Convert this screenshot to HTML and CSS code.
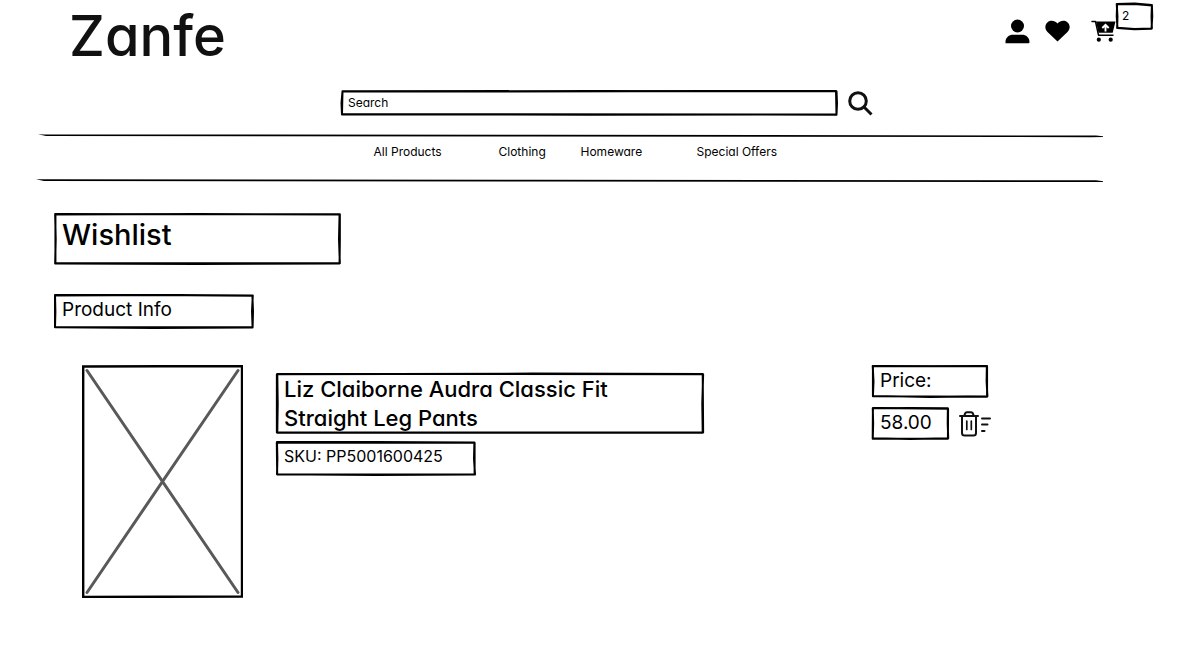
FILE: index.html
```html
<!DOCTYPE html>
<html lang="en">
<head>
<meta charset="utf-8">
<meta name="viewport" content="width=device-width, initial-scale=1">
<title>Zanfe – Wishlist</title>
<link rel="stylesheet" href="styles.css">
</head>
<body>
<header class="header">
  <a class="logo" href="#">Zanfe</a>
  <div class="actions">
    <button class="icon-button" type="button" aria-label="Account">
      <svg width="25" height="25" viewBox="0 0 25 25"><circle cx="12.5" cy="7" r="6.5"/><path d="M.5 24.200v-1.300C.5 18.500 4 15.800 8 15.800h9c4 0 7.500 2.700 7.500 7.100v.3q0 1-1 1z"/></svg>
    </button>
    <button class="icon-button" type="button" aria-label="Wishlist">
      <svg width="25" height="25" viewBox="0 0 25 25"><path d="M12.500 22.500 2.500 13C-.5 10-.3 5.500 2.600 3.200 5.500 1 9.700 1.300 12.500 4.500c2.800-3.200 7-3.500 9.900-1.300 2.900 2.300 3.100 6.800.1 9.800z"/></svg>
    </button>
    <button class="icon-button cart" type="button" aria-label="Cart">
      <svg width="25" height="25" viewBox="0 0 25 25"><path d="M1 2.500h3.500l3 13.700h14.500" fill="none" stroke="#000" stroke-width="1.500" stroke-linecap="round" stroke-linejoin="round"/><path d="M5 2.500h19.500l-2.800 11.200H7.500z"/><path d="M14.500 12.500V6M11.300 9l3.200-3.200L17.700 9" fill="none" stroke="#fff" stroke-width="1.900"/><circle cx="7.800" cy="20.700" r="2.100"/><circle cx="19.700" cy="20.700" r="2.100"/></svg>
    </button>
    <span class="box badge"><svg class="frame" viewBox="0 0 100 100" preserveAspectRatio="none" aria-hidden="true"><path d="M2 4 50 2 97 7 98 50 96 95 50 97 3 93 4 50ZM3 5 50 4 97 9 96 50 97 94 50 96 4 92 2 50Z"/></svg>2</span>
  </div>
</header>

<form class="search" role="search">
  <label class="box search-box"><svg class="frame" viewBox="0 0 100 100" preserveAspectRatio="none" aria-hidden="true"><path d="M.3 5 50 4 99.700 5 99.800 50 99.700 94 50 95 .2 94 .1 50ZM.3 6 99.600 4 99.700 95 .2 93Z"/></svg><input class="search-input" type="text" value="Search" aria-label="Search"></label>
  <button class="icon-button" type="submit" aria-label="Search">
    <svg width="25" height="25" viewBox="0 0 25 25" fill="none" stroke="#111" stroke-width="3"><circle cx="10" cy="10" r="8.300"/><path d="m16 16 7.500 7.500"/></svg>
  </button>
</form>

<nav class="nav" aria-label="Main">
  <svg class="rule" viewBox="0 0 1068 4" preserveAspectRatio="none" aria-hidden="true"><path d="M2 .3 8 .4 500 .7 1060 1.600 1067 2.300 1067 2.900 1055 3.200 500 2.400 10 2Z"/></svg>
  <ul class="nav-list">
    <li><a href="#">All Products</a></li>
    <li><a href="#">Clothing</a></li>
    <li><a href="#">Homeware</a></li>
    <li><a href="#">Special Offers</a></li>
  </ul>
  <svg class="rule" viewBox="0 0 1068 4" preserveAspectRatio="none" aria-hidden="true"><path d="M0 .2 6 .3 500 .8 1060 1.300 1067 2.200 1067 2.900 1055 3 500 2.600 8 1.900Z"/></svg>
</nav>

<main class="main">
  <h1 class="box title"><svg class="frame" viewBox="0 0 100 100" preserveAspectRatio="none" aria-hidden="true"><path d="M.4 2 40 2.500 99.600 2.500 99.600 50 99.500 97 50 98 .4 97 .6 50ZM.5 3 50 2 99.500 3 99.300 50 99.600 96.500 .5 96.500Z"/></svg>Wishlist</h1>
  <h2 class="box subtitle"><svg class="frame" viewBox="0 0 100 100" preserveAspectRatio="none" aria-hidden="true"><path d="M.5 3 50 3 99.200 5 99.500 50 99.300 96 50 97 .5 95 .7 50ZM.5 4 60 3 99.400 4 99 50 99.300 95 .5 95Z"/></svg>Product Info</h2>

  <article class="item">
    <svg class="thumb" viewBox="0 0 161 233" role="img" aria-label="Product image"><g fill="none" stroke="#595959" stroke-width="3" stroke-linecap="round"><path d="m5 5.500 151 222M156 5.500 5 227.500"/></g><path d="M1.200 1.500 80 1.300 160 1 160 231.500 80 231.800 1.200 232Z" fill="none" stroke="#000" stroke-width="2.400"/></svg>
    <div class="details">
      <h3 class="box name"><svg class="frame" viewBox="0 0 100 100" preserveAspectRatio="none" aria-hidden="true"><path d="M.3 1.500 50 1.500 99.800 2 99.600 50 99.700 98 50 98 .3 98 .4 50ZM.2 2 60 1 99.700 1.500 99.800 97.500 .2 97.500Z"/></svg>Liz Claiborne Audra Classic Fit Straight Leg Pants</h3>
      <p class="box sku"><svg class="frame" viewBox="0 0 100 100" preserveAspectRatio="none" aria-hidden="true"><path d="M.5 3 50 3 99.200 4 99 50 99.500 96 50 97 .5 95 .7 50ZM.4 4 99.300 5 99.300 95 .6 96Z"/></svg>SKU: PP5001600425</p>
    </div>
    <div class="pricing">
      <p class="box price-label"><svg class="frame" viewBox="0 0 100 100" preserveAspectRatio="none" aria-hidden="true"><path d="M.6 3 50 4 99 4 98.800 50 99.500 95 50 97 .8 94 1.300 50ZM.8 4 99.200 3 99.200 96 .8 95Z"/></svg>Price:</p>
      <div class="amount-row">
        <p class="box amount"><svg class="frame" viewBox="0 0 100 100" preserveAspectRatio="none" aria-hidden="true"><path d="M1 4 50 3 98.500 4 98.300 50 99 95 50 97 1 95 1.500 50ZM1.200 3 98.800 5 98.600 96 .9 96Z"/></svg>58.00</p>
        <button class="icon-button" type="button" aria-label="Remove from wishlist">
          <svg width="32" height="26" viewBox="0 0 32 26" fill="none" stroke="#111" stroke-width="2" stroke-linecap="round" stroke-linejoin="round"><path d="M1 5h18M5.500 4.500Q6 1.200 8 1.200h4q2 0 2.500 3.300M3 5.500v16.500q0 2.500 2.500 2.500h9q2.500 0 2.500-2.500V5.500"/><path d="M7.800 10v8.500M12.300 10v8.500" stroke-width="1.700"/><path d="M23 7.500h8M23 13.500h5.500M23 20h2.500"/></svg>
        </button>
      </div>
    </div>
  </article>
</main>
</body>
</html>
```
FILE: styles.css
```css
* {
  box-sizing: border-box;
}

body {
  margin: 0;
  background: #fff;
  color: #000;
  font-family: Inter, "Open Sans", sans-serif;
  font-feature-settings: "cv11";
  font-size: 12px;
  line-height: 20px;
}

h1, h2, h3, p, ul {
  margin: 0;
  padding: 0;
  font-weight: 400;
}

a {
  color: inherit;
  text-decoration: none;
}

svg {
  display: block;
}

.box {
  position: relative;
  padding: 4px 8px;
}

.frame {
  position: absolute;
  inset: 0;
  width: 100%;
  height: 100%;
  overflow: visible;
  pointer-events: none;
}

.frame path {
  fill: none;
  stroke: #000;
  stroke-width: 2px;
  stroke-linejoin: round;
  vector-effect: non-scaling-stroke;
}

.icon-button {
  padding: 0;
  border: 0;
  background: none;
  cursor: pointer;
}

.header {
  display: flex;
  justify-content: space-between;
  align-items: flex-start;
  padding: 0 86px 0 69px;
}

.logo {
  color: #111;
  font-size: 56px;
  font-weight: 500;
  line-height: 72px;
}

.actions {
  position: relative;
  display: flex;
  gap: 15px;
  padding-top: 19px;
}

.cart {
  margin-left: 6px;
}

.badge {
  position: absolute;
  top: 3px;
  left: 100%;
  width: 37px;
  height: 27px;
  padding: 3px 6px;
}

.search {
  display: flex;
  align-items: center;
  gap: 10px;
  width: 544px;
  max-width: 100%;
  margin: 18px auto 0;
  padding-left: 12px;
}

.search-box {
  flex: 1;
  height: 26px;
  padding: 3px 7px;
}

.search-input {
  display: block;
  width: 100%;
  padding: 0;
  border: 0;
  outline: 0;
  background: none;
  color: inherit;
  font: inherit;
  font-feature-settings: inherit;
}

.nav {
  margin: 18px 98px 0 36px;
}

.rule {
  width: 100%;
  height: 4px;
}

.nav-list {
  display: grid;
  grid-template-columns: 125px 82px 116px 84px;
  justify-content: center;
  padding: 4px 0 17px 14px;
  list-style: none;
  white-space: nowrap;
}

.main {
  padding: 30px 211px 60px 54px;
}

.title {
  width: 287px;
  height: 52px;
  font-size: 29px;
  font-weight: 500;
  line-height: 36px;
}

.subtitle {
  width: 200px;
  height: 35px;
  margin-top: 29px;
  font-size: 19px;
  line-height: 24px;
}

.item {
  display: flex;
  align-items: flex-start;
  gap: 33px;
  margin: 36px 0 0 28px;
}

.thumb {
  flex: none;
  width: 161px;
}

.details {
  flex: 0 1 428px;
  padding-top: 8px;
}

.name {
  padding: 2px 8px 1px;
  font-size: 22px;
  font-weight: 500;
  line-height: 29px;
}

.sku {
  width: 200px;
  height: 35px;
  margin-top: 7px;
  font-size: 16px;
  line-height: 22px;
}

.pricing {
  margin-left: auto;
  font-size: 19px;
  line-height: 24px;
}

.price-label {
  width: 116px;
  height: 33px;
}

.amount-row {
  display: flex;
  align-items: center;
  gap: 10px;
  margin-top: 9px;
}

.amount {
  width: 77px;
  height: 33px;
}
```
